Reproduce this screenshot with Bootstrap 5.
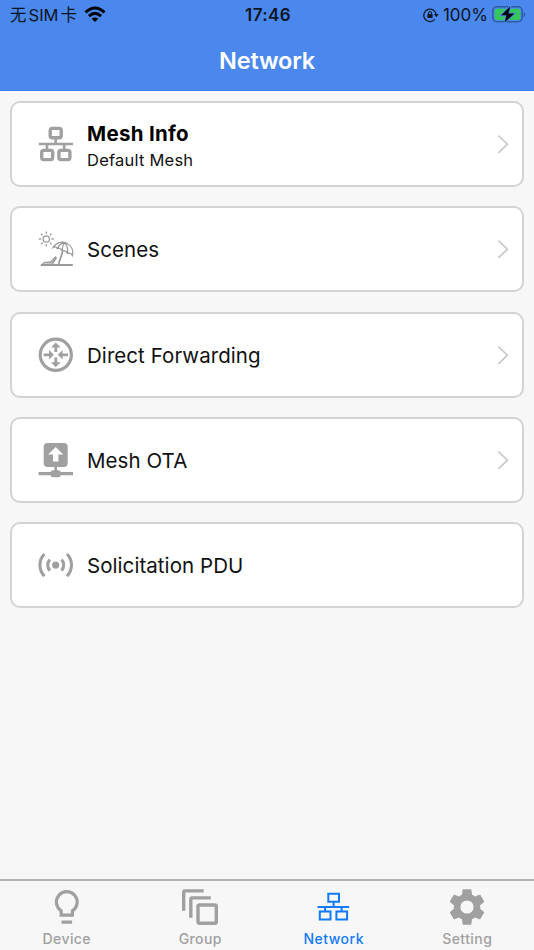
<!DOCTYPE html>
<html lang="en">
<head>
<meta charset="utf-8">
<meta name="viewport" content="width=device-width, initial-scale=1">
<title>Network</title>
<link href="https://cdn.jsdelivr.net/npm/bootstrap@5.3.0/dist/css/bootstrap.min.css" rel="stylesheet">
<style>
body{font-family:Inter,"Noto Sans CJK SC",sans-serif;background:#f7f7f7;color:#111;height:950px;overflow:hidden}
svg{display:block;flex:none}
.top{background:#4a88ee;height:91px;border-bottom:1px solid #3880ec;color:#fff}
.status{height:30px;color:#0c1524;font-size:17px;line-height:30px;padding:0 8px 0 10px}
.carrier{font-size:16.5px;word-spacing:-2.6px}
.wifi{margin-left:7px}
.clock{font-weight:600;letter-spacing:.35px;font-size:17px}
.title{font-size:23.5px;font-weight:600;line-height:30px;padding-top:16px;letter-spacing:-.2px}
.menu{padding:10px 10px 0;gap:19.35px}
.entry{height:86px;border:2px solid #d3d3d3;border-radius:10px;background:#fff;padding:0 12px 0 26px;color:#111;text-decoration:none}
.entry .label{font-size:20.5px;line-height:26px;margin-left:13px;padding-top:2px;letter-spacing:.06px}
.entry .label.double{padding-top:6px}
.entry strong{display:block;font-weight:700;color:#000;letter-spacing:.3px}
.entry .sub{display:block;font-size:16.5px;line-height:26px;letter-spacing:.22px}
.ink{color:#a0a0a0}
.tabs{height:71px;border-top:2px solid #b3b3b3;padding-top:8px;font-size:14px;font-weight:500;color:#a0a0a0}
.tabs a{color:inherit;text-decoration:none;line-height:20px;letter-spacing:.42px}
.tabs svg{margin-bottom:4px}
.tabs a.current{color:#117aff;letter-spacing:.5px}
</style>
<script src="https://cdn.jsdelivr.net/npm/bootstrap@5.3.0/dist/js/bootstrap.bundle.min.js"></script>
</head>
<body class="d-flex flex-column">
<header class="top flex-shrink-0">
  <div class="status row g-0">
    <div class="col d-flex align-items-center"><span class="carrier">无 SIM 卡</span>
      <svg class="wifi" width="22" height="18" viewBox="0 0 22 18" fill="none" stroke="#000" stroke-width="3"><path d="M1.5 6.4Q11-2.3 20.5 6.4M5 10.1Q11 4.7 17 10.1"/><path d="M7.7 12.7Q11 10.2 14.3 12.7L11 16.1Z" fill="#000" stroke="none"/></svg>
    </div>
    <div class="col-auto clock">17:46</div>
    <div class="col d-flex align-items-center justify-content-end">
      <svg width="16" height="16" viewBox="0 0 16 16" fill="none" stroke="#101a2b" stroke-width="1.3"><path d="M11.7 12.4A6.2 6.2 0 1 1 13.2 8"/><path d="M10.9 7h4.8l-2.4 3.2z" fill="#101a2b" stroke="none"/><rect x="4.4" y="7" width="5.2" height="4.1" rx=".6" fill="#101a2b" stroke="none"/><path d="M5.5 7.2V6a1.5 1.5 0 0 1 3 0v1.2" stroke-width="1"/></svg>
      <span class="hundred ms-1 me-1">100%</span>
      <svg width="34" height="20" viewBox="0 0 34 20"><rect x=".8" y="1.8" width="29.4" height="15" rx="4.2" fill="none" stroke="#315b9e" stroke-width="1.5"/><rect x="2.7" y="3.7" width="25.6" height="11.2" rx="2.5" fill="#34c759"/><path d="M31.6 7v5q1.7-.6 1.7-2.5T31.6 7" fill="#315b9e"/><path d="M18.3 1.4 9 10.3h5.6l-2.1 7.3 9.8-9h-5.9z" fill="#000" stroke="#4a88ee" stroke-width="1.8" paint-order="stroke"/></svg>
    </div>
  </div>
  <h1 class="title text-center mb-0">Network</h1>
</header>

<main class="menu d-flex flex-column flex-grow-1">
  <a class="entry d-flex align-items-center" href="#">
    <svg class="ink" width="36" height="36" viewBox="0 0 36 36" fill="none" stroke="currentColor" stroke-width="3.4"><rect x="12.2" y="2.4" width="11" height="9.3" rx="2"/><path d="M.8 18h34.2M17.7 12v6M9 18v6M26.2 18v6" stroke-width="2.6"/><rect x="3.7" y="24.4" width="11" height="9.2" rx="2"/><rect x="20.9" y="24.4" width="11" height="9.2" rx="2"/></svg>
    <span class="label double"><strong>Mesh Info</strong><span class="sub">Default Mesh</span></span>
    <svg class="ms-auto" width="14" height="22" viewBox="0 0 14 22" fill="none" stroke="#cbcbcb" stroke-width="1.8"><path d="M2.4 2.6l9 8.6-9 8.6"/></svg>
  </a>
  <a class="entry d-flex align-items-center" href="#">
    <svg class="ink" width="36" height="36" viewBox="0 0 36 36" fill="none" stroke="#999" stroke-width="1.3"><circle cx="8.3" cy="8" r="3.2"/><path d="M8.3.6v2.2M8.3 13.2v2.2M.9 8h2.2M13.5 8h2.2M3.1 2.8l1.5 1.5M12 11.7l1.5 1.5M3.1 13.2l1.5-1.5M12 4.3l1.5-1.5"/><path d="M15.2 16.4C18 11.4 24 9.8 29.1 12.5c4.5 2.4 6.4 7.2 5.3 11.9-1-1.9-3.1-2.6-4.9-2-1-2-3.2-3-5.1-2.6-1.2-2-3.2-2.8-5-2.2-1-1.6-2.7-2-4.2-1.2zM26.5 11.6c-3.4.6-5.8 3-7.1 6M26.5 11.6c-1.8 2.3-2.4 5.2-2.1 8.2M26.5 11.6c2.7 2.8 3.6 6.7 3 10.8" stroke-width="1.3"/><path d="M24.8 20l-4.3 13.6" stroke-width="1.7"/><path d="M4.5 32.6c2-2 5.4-1.2 7.8-1.4 2-.8 3-3.7 5.3-5.2l.7.8-3.8 6.1" fill="#bbb" stroke-width="1.3"/><path d="M2.8 34h32" stroke-width="1.9"/></svg>
    <span class="label">Scenes</span>
    <svg class="ms-auto" width="14" height="22" viewBox="0 0 14 22" fill="none" stroke="#cbcbcb" stroke-width="1.8"><path d="M2.4 2.6l9 8.6-9 8.6"/></svg>
  </a>
  <a class="entry d-flex align-items-center" href="#">
    <svg class="ink" width="36" height="36" viewBox="0 0 36 36" fill="currentColor"><circle cx="17.8" cy="17.8" r="15.6" fill="none" stroke="currentColor" stroke-width="3.2"/><path d="M17.8 5.4l4.8 5h-3.4v4.6h-2.8v-4.6H13zM17.8 30.2l4.8-5h-3.4v-4.6h-2.8v4.6H13zM15.8 17.8L11 13v3.4H5.6v2.8H11v3.4zM19.8 17.8l4.8-4.8v3.4H30v2.8h-5.4v3.4z"/></svg>
    <span class="label">Direct Forwarding</span>
    <svg class="ms-auto" width="14" height="22" viewBox="0 0 14 22" fill="none" stroke="#cbcbcb" stroke-width="1.8"><path d="M2.4 2.6l9 8.6-9 8.6"/></svg>
  </a>
  <a class="entry d-flex align-items-center" href="#">
    <svg class="ink" width="36" height="36" viewBox="0 0 36 36" fill="currentColor"><rect x="5.7" y="1" width="24" height="24" rx="4"/><path d="M16.4 24h2.6v5h-2.6zM.6 30H35v3.2H.6z"/><rect x="12.6" y="28.2" width="10.2" height="7" rx="2.5"/><path d="M17.7 5l7.5 7.4h-4.8v7.2h-5.4v-7.2h-4.8z" fill="#fff"/></svg>
    <span class="label">Mesh OTA</span>
    <svg class="ms-auto" width="14" height="22" viewBox="0 0 14 22" fill="none" stroke="#cbcbcb" stroke-width="1.8"><path d="M2.4 2.6l9 8.6-9 8.6"/></svg>
  </a>
  <a class="entry d-flex align-items-center" href="#">
    <svg class="ink" width="36" height="36" viewBox="0 0 36 36" fill="none" stroke="currentColor" stroke-width="3.1"><circle cx="17.7" cy="18.1" r="3.6" fill="currentColor" stroke="none"/><path d="M11.9 12.6a8 8 0 0 0 0 11M23.5 12.6a8 8 0 0 1 0 11M6.4 7a16 16 0 0 0 0 22.2M29 7a16 16 0 0 1 0 22.2"/></svg>
    <span class="label">Solicitation PDU</span>
  </a>
</main>

<nav class="tabs row g-0 flex-shrink-0 text-center">
  <a class="col" href="#"><svg class="mx-auto" width="36" height="36" viewBox="0 0 36 36" fill="none" stroke="currentColor" stroke-width="3.2"><path d="M12.2 26.2v-4.4a10.4 10.4 0 1 1 11.2 0v4.4zM12.5 33.2h10.6"/></svg>Device</a>
  <a class="col" href="#"><svg class="mx-auto" width="36" height="36" viewBox="0 0 36 36" fill="none" stroke="currentColor" stroke-width="3.4"><path d="M1.7 21.7V3.2q0-1.3 1.3-1.3h18.7M8.8 28.7V10.2q0-1.3 1.3-1.3h18.7"/><rect x="16" y="16" width="18.3" height="18.3" rx="1.6"/></svg>Group</a>
  <a class="col current" href="#"><svg class="mx-auto" width="36" height="36" viewBox="0 0 36 36" fill="none" stroke="currentColor" stroke-width="2"><path d="M12.3 4.8H23v8H12.3zM1.5 18h31.7M17.6 12.8V18M9.1 18v4.6M25.6 18v4.6M3.8 22.6h10.7v8H3.8zM20.4 22.6h10.7v8H20.4z"/></svg>Network</a>
  <a class="col" href="#"><svg class="mx-auto" width="36" height="36" viewBox="2.2 2.2 19.6 19.6" fill="currentColor"><path d="M19.14 12.94c.04-.3.06-.61.06-.94s-.02-.64-.07-.94l2.03-1.58c.18-.14.23-.41.12-.61l-1.92-3.32c-.12-.22-.37-.29-.59-.22l-2.39.96c-.5-.38-1.03-.7-1.62-.94l-.36-2.54a.48.48 0 0 0-.48-.41h-3.84a.48.48 0 0 0-.47.41l-.36 2.54c-.59.24-1.13.57-1.62.94l-2.39-.96c-.22-.08-.47 0-.59.22L2.74 8.87c-.12.21-.08.47.12.61l2.03 1.58c-.05.3-.09.63-.09.94s.02.64.07.94l-2.03 1.58c-.18.14-.23.41-.12.61l1.92 3.32c.12.22.37.29.59.22l2.39-.96c.5.38 1.03.7 1.62.94l.36 2.54c.05.24.24.41.48.41h3.84c.24 0 .44-.17.47-.41l.36-2.54c.59-.24 1.13-.56 1.62-.94l2.39.96c.22.08.47 0 .59-.22l1.92-3.32c.12-.22.07-.47-.12-.61zM12 15.6a3.6 3.6 0 1 1 0-7.2 3.6 3.6 0 0 1 0 7.2z"/></svg>Setting</a>
</nav>
</body>
</html>
